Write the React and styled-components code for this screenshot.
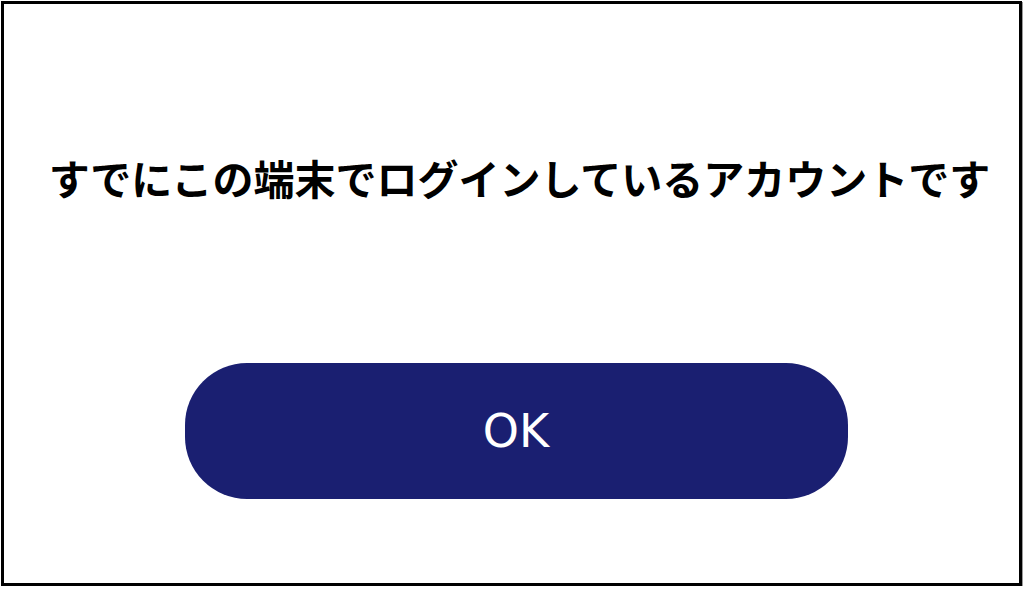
import styled, { createGlobalStyle } from 'styled-components'

const GlobalStyle = createGlobalStyle`
    html, body {
        margin: 0;
        padding: 0;
        background: #ffffff;
    }
`

const Frame = styled.div`
    box-sizing: border-box;
    margin: 1px 0 0 1px;
    width: 1021px;
    height: 585px;
    border: 3px solid #000;
    box-shadow: 1px 1px 0 #9a9a9a;
    background: #fff;
    display: flex;
    flex-direction: column;
    align-items: center;
`

const Message = styled.p`
    margin: 145px 0 0;
    padding-left: 16px;
    font-family: "Noto Sans CJK JP", "Noto Sans", sans-serif;
    font-weight: 700;
    font-size: 41px;
    line-height: 56px;
    color: #000;
    white-space: nowrap;
`

const OkButton = styled.button`
    margin: 158px 0 0 9px;
    width: 663px;
    height: 136px;
    border: none;
    border-radius: 62px;
    background: #1a1f71;
    color: #fff;
    font-family: "DejaVu Sans", "Noto Sans", sans-serif;
    font-size: 46px;
    font-weight: 400;
    cursor: pointer;
`

function App() {
    return (
        <>
            <GlobalStyle />
            <Frame>
                <Message>すでにこの端末でログインしているアカウントです</Message>
                <OkButton>OK</OkButton>
            </Frame>
        </>
    )
}

export default App
